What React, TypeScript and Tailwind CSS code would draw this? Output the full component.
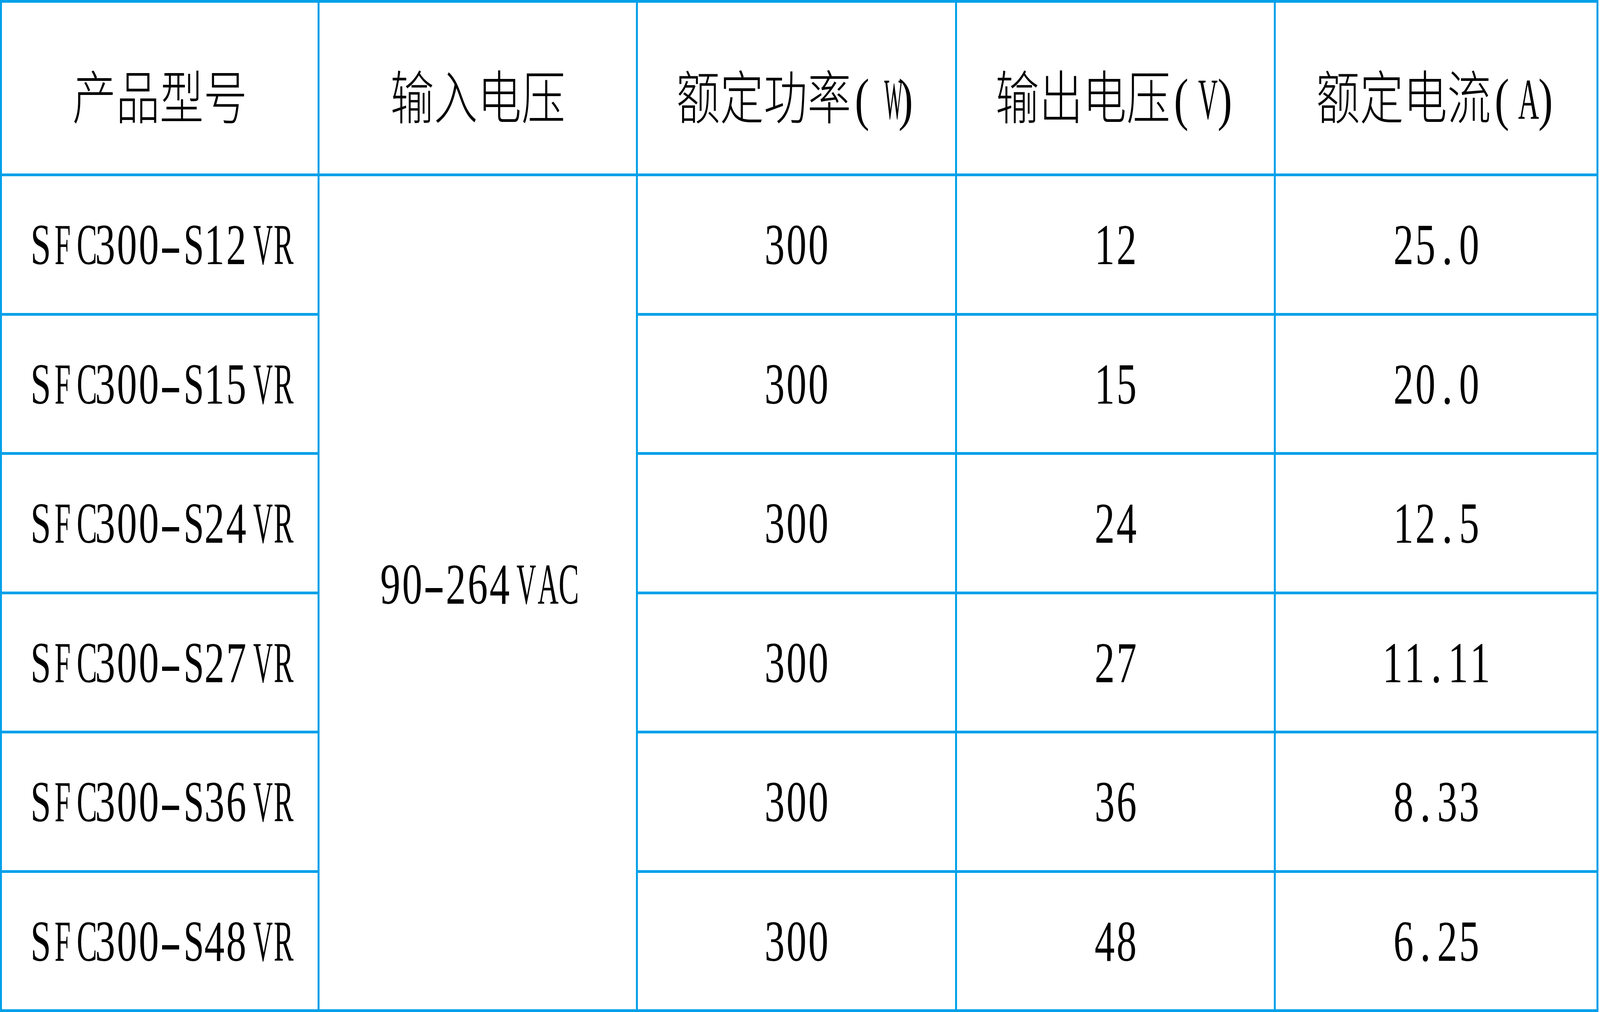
import React from "react";

const headers = ["产品型号", "输入电压", "额定功率(W)", "输出电压(V)", "额定电流(A)"];

const rows = [
  { model: "SFC300-S12VR", power: "300", volt: "12", amp: "25.0" },
  { model: "SFC300-S15VR", power: "300", volt: "15", amp: "20.0" },
  { model: "SFC300-S24VR", power: "300", volt: "24", amp: "12.5" },
  { model: "SFC300-S27VR", power: "300", volt: "27", amp: "11.11" },
  { model: "SFC300-S36VR", power: "300", volt: "36", amp: "8.33" },
  { model: "SFC300-S48VR", power: "300", volt: "48", amp: "6.25" },
];

// narrow the serif glyphs so they sit in half-width boxes like the source font
const glyphScale: Record<string, string> = {
  S: "scale-x-[0.84]",
  F: "scale-x-[0.66]",
  C: "scale-x-[0.7]",
  V: "scale-x-[0.62]",
  R: "scale-x-[0.68]",
  A: "scale-x-[0.66]",
  W: "scale-x-[0.45]",
  "-": "scale-x-[1.5]",
};

function glyphClass(ch: string) {
  if (glyphScale[ch]) return glyphScale[ch];
  if (/[0-9]/.test(ch)) return "scale-x-[0.92]";
  return "";
}

function Txt({ text }: { text: string }) {
  return (
    <span className="inline-block whitespace-nowrap scale-x-[0.756]">
      {Array.from(text).map((ch, i) =>
        /[\u2e80-\u9fff]/.test(ch) ? (
          <span key={i} className="font-light">
            {ch}
          </span>
        ) : (
          <span key={i} className="inline-block w-[0.5em] text-center">
            <span className={`inline-block ${glyphClass(ch)}`}>{ch}</span>
          </span>
        )
      )}
    </span>
  );
}

function Cell({ text, head }: { text: string; head?: boolean }) {
  return (
    <div className={`bg-white flex items-center justify-center ${head ? "pt-[56px]" : ""}`}>
      <Txt text={text} />
    </div>
  );
}

export default function App() {
  return (
    <div className="w-full h-[2590px] bg-white overflow-hidden">
      <div className="inline-grid grid-cols-[808px_810px_812px_811px_821px] grid-rows-[437px_350px_349px_350px_349px_350px_349px] gap-x-[5px] gap-y-[7px] px-[5px] py-[7px] bg-[#00a0e9] text-black text-[148px] leading-none font-['Liberation_Serif','Noto_Sans_CJK_SC',serif]">
        {headers.map((h) => (
          <Cell key={h} text={h} head />
        ))}
        {rows.map((r, idx) => (
          <React.Fragment key={r.model}>
            <Cell text={r.model} />
            {idx === 0 && (
              <div className="row-span-6 bg-white flex items-center justify-center pb-[44px]">
                <Txt text="90-264VAC" />
              </div>
            )}
            <Cell text={r.power} />
            <Cell text={r.volt} />
            <Cell text={r.amp} />
          </React.Fragment>
        ))}
      </div>
    </div>
  );
}
